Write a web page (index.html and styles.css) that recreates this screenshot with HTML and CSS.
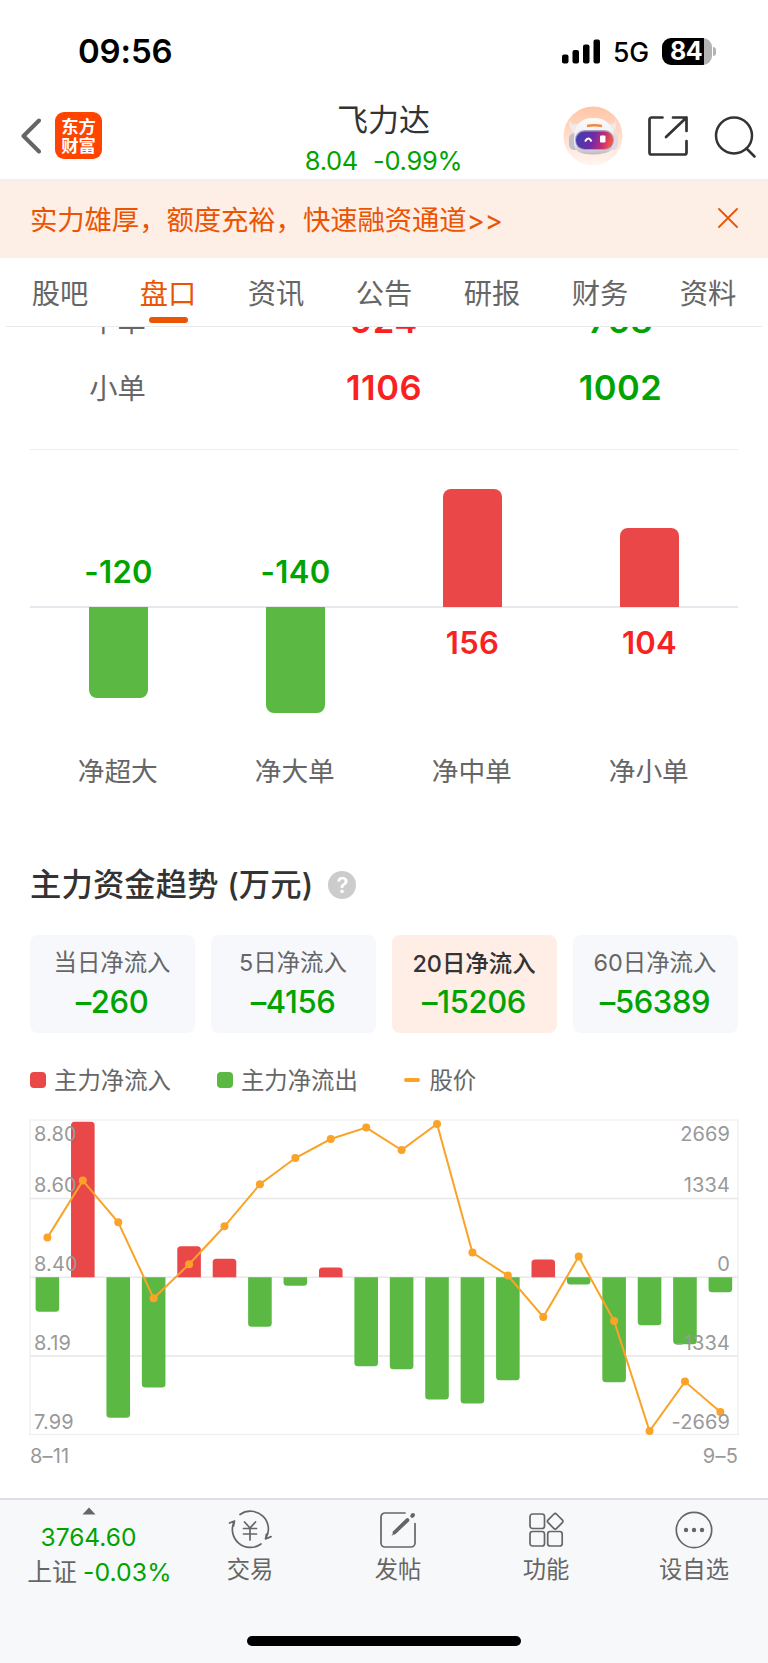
FILE: index.html
```html
<!DOCTYPE html>
<html lang="zh-CN">
<head>
<meta charset="utf-8">
<title>飞力达</title>
<link rel="stylesheet" href="styles.css">
</head>
<body>
<div class="screen">
  <div class="status">
    <span class="clock">09:56</span>
    <div class="status-right">
      <svg class="signal" width="39" height="25" viewBox="0 0 39 25"><rect x="0" y="15.5" width="6.5" height="9" rx="2"/><rect x="10.5" y="11" width="6.5" height="13.500" rx="2"/><rect x="21" y="5.500" width="6.500" height="19" rx="2"/><rect x="31.500" y="0.500" width="6.500" height="24" rx="2"/></svg>
      <span class="network">5G</span>
      <div class="battery"><span>84</span></div>
      <i class="battery-nub"></i>
    </div>
  </div>

  <header class="nav">
    <div class="nav-left">
      <svg width="20" height="36" viewBox="0 0 20 36"><path d="M18 2.500 2.500 18 18 33.500" fill="none" stroke="#666" stroke-width="4" stroke-linecap="round" stroke-linejoin="round"/></svg>
      <div class="logo"><span>东方</span><span>财富</span></div>
    </div>
    <div class="nav-title">
      <h1>飞力达</h1>
      <p><span>8.04</span><span>-0.99%</span></p>
    </div>
    <div class="nav-right">
      <svg class="bot" width="60" height="60" viewBox="0 0 60 60">
        <defs>
          <linearGradient id="halo" x1="0" y1="0" x2="0" y2="1"><stop offset="0" stop-color="#ffc5a6"/><stop offset="1" stop-color="#fff6f2"/></linearGradient>
          <linearGradient id="visor" x1="0" y1="0" x2="1" y2="0.15"><stop offset="0" stop-color="#3c41b5"/><stop offset=".5" stop-color="#6f2aa6"/><stop offset=".8" stop-color="#c52c78"/><stop offset="1" stop-color="#ef5348"/></linearGradient>
          <linearGradient id="shell" x1="0" y1="0" x2="0" y2="1"><stop offset="0" stop-color="#fbfafb"/><stop offset=".7" stop-color="#eceaf0"/><stop offset="1" stop-color="#bdb9c3"/></linearGradient>
        </defs>
        <circle cx="30" cy="30" r="29.500" fill="url(#halo)"/>
        <path d="M6 14q-.5 9 6 13l6-10Q8 21 6 14ZM53 14q2 9-5 13l-6-10q9 4 11-3Z" fill="#f0eaee"/>
        <rect x="6" y="27" width="11" height="17" rx="5.500" fill="#c3bfc8"/>
        <rect x="44" y="27" width="11" height="17" rx="5.500" fill="#dfdae1"/>
        <path d="M11 33q0-21 19.500-21T51 33v4q0 11-20 11.500T11 37Z" fill="url(#shell)"/>
        <path d="M24 20q7-1.500 15 0" fill="none" stroke="#ee8a3e" stroke-width="2.500"/>
        <rect x="12" y="24" width="39" height="20" rx="9.500" fill="#a9a2bd"/>
        <rect x="13" y="25.500" width="37" height="17.500" rx="8.500" fill="url(#visor)"/>
        <path d="M22 35.500q3.500-6 6.500 0" fill="none" stroke="#fff" stroke-width="2"/>
        <rect x="37" y="29.500" width="5.500" height="7" rx="1" fill="#fff"/>
      </svg>
      <svg class="share" width="42" height="42" viewBox="0 0 42 42" fill="none" stroke="#333" stroke-width="2.700" stroke-linecap="round" stroke-linejoin="round"><path d="M15.500 2.500H4.500a2 2 0 0 0-2 2v33a2 2 0 0 0 2 2h33a2 2 0 0 0 2-2V26"/><path d="M26 2.500h13.500V16M39.500 2.500 19 22"/></svg>
      <svg class="search" width="42" height="42" viewBox="0 0 42 42" fill="none" stroke="#333" stroke-width="2.500" stroke-linecap="round"><circle cx="20" cy="19.500" r="18"/><path d="M32.500 32.500 40.500 40.500"/></svg>
    </div>
  </header>

  <div class="banner">
    <span>实力雄厚，额度充裕，快速融资通道&gt;&gt;</span>
    <svg width="20" height="20" viewBox="0 0 20 20"><path d="M1 1 19 19M19 1 1 19" stroke="#ea5504" stroke-width="1.800" stroke-linecap="round"/></svg>
  </div>

  <nav class="tabs">
    <a>股吧</a><a class="on">盘口</a><a>资讯</a><a>公告</a><a>研报</a><a>财务</a><a>资料</a>
  </nav>

  <section class="orders">
    <div class="row"><span class="kind">中单</span><b class="up">924</b><b class="down">768</b></div>
    <div class="row"><span class="kind">小单</span><b class="up">1106</b><b class="down">1002</b></div>
  </section>

  <section class="net">
    <div class="net-col neg"><div class="upper"><b>-120</b></div><div class="lower"><i style="height:91px"></i></div><span>净超大</span></div>
    <div class="net-col neg"><div class="upper"><b>-140</b></div><div class="lower"><i style="height:106px"></i></div><span>净大单</span></div>
    <div class="net-col pos"><div class="upper"><i style="height:118px"></i></div><div class="lower"><b>156</b></div><span>净中单</span></div>
    <div class="net-col pos"><div class="upper"><i style="height:79px"></i></div><div class="lower"><b>104</b></div><span>净小单</span></div>
  </section>

  <section class="trend">
    <div class="heading"><h2>主力资金趋势 (万元)</h2><span class="help">?</span></div>
    <div class="cards">
      <div class="card"><span>当日净流入</span><b>–260</b></div>
      <div class="card"><span>5日净流入</span><b>–4156</b></div>
      <div class="card on"><span>20日净流入</span><b>–15206</b></div>
      <div class="card"><span>60日净流入</span><b>–56389</b></div>
    </div>
    <div class="legend">
      <div class="key in"><i></i><span>主力净流入</span></div>
      <div class="key out"><i></i><span>主力净流出</span></div>
      <div class="key price"><i></i><span>股价</span></div>
    </div>
    <svg class="chart" width="710" height="317" viewBox="0 0 710 317">
      <g class="frame"><rect x="1" y="1" width="708" height="314.500"/></g>
      <g class="grid"><path d="M1 79.500H709M1 158.200H709M1 237H709"/></g>
      <g id="bars"></g>
      <g id="price"></g>
      <g class="axis">
        <text x="5" y="22.300">8.80</text><text x="5" y="73.300">8.60</text><text x="5" y="152.300">8.40</text><text x="5" y="231">8.19</text><text x="5" y="309.500">7.99</text>
        <g text-anchor="end"><text x="701" y="22.300">2669</text><text x="701" y="73.300">1334</text><text x="701" y="152.300">0</text><text x="701" y="231">-1334</text><text x="701" y="309.500">-2669</text></g>
      </g>
    </svg>
    <div class="dates"><span>8–11</span><span>9–5</span></div>
  </section>

  <footer class="dock">
    <div class="index">
      <svg width="14" height="8" viewBox="0 0 14 8"><path d="M7 .5 13.500 7.500H.5Z" fill="#666"/></svg>
      <b>3764.60</b>
      <p><span>上证</span><em>-0.03%</em></p>
    </div>
    <div class="item">
      <svg width="44" height="40" viewBox="0 0 44 40" fill="none" stroke="#666" stroke-width="1.700" stroke-linecap="round" stroke-linejoin="round"><path d="M12 4.500A18 18 0 0 1 37.500 29L43 26.600M37.500 29 38.500 24M33 34A18 18 0 0 1 6.500 11L1.500 13M6.500 11 5.500 16"/><path d="M16.500 12 22 18 27.500 12M22 18V30M15.500 18.500H28.500M15.500 24H28.500"/></svg>
      <span>交易</span>
    </div>
    <div class="item">
      <svg width="40" height="40" viewBox="0 0 40 40" fill="none" stroke="#666" stroke-width="1.700" stroke-linecap="round"><path d="M27 3H7a4 4 0 0 0-4 4v26a4 4 0 0 0 4 4h26a4 4 0 0 0 4-4V13.500"/><path d="M13.500 26 16 21.500 28.500 8.500 31 11 18 23Z" fill="#666" stroke="none"/><path d="M16.500 22.500 29.500 10" stroke-width="3.800"/><path d="M34.200 5.800 35 5" stroke-width="4"/></svg>
      <span>发帖</span>
    </div>
    <div class="item">
      <svg width="40" height="40" viewBox="0 0 40 40" fill="none" stroke="#666" stroke-width="1.700"><rect x="4" y="4" width="14.500" height="14.500" rx="2.500"/><rect x="4" y="21.500" width="14.500" height="14.500" rx="2.500"/><rect x="21.700" y="21.500" width="14.500" height="14.500" rx="2.500"/><rect x="23.200" y="5.300" width="12" height="12" rx="2" transform="rotate(45 29.200 11.300)"/></svg>
      <span>功能</span>
    </div>
    <div class="item">
      <svg width="40" height="40" viewBox="0 0 40 40"><circle cx="20" cy="20" r="17.700" fill="none" stroke="#666" stroke-width="1.700"/><g fill="#666"><circle cx="12" cy="20" r="2.200"/><circle cx="20" cy="20" r="2.200"/><circle cx="28" cy="20" r="2.200"/></g></svg>
      <span>设自选</span>
    </div>
    <i class="home"></i>
  </footer>
</div>
<script src="chart.js"></script>
</body>
</html>
```
FILE: styles.css
```css
* { box-sizing: border-box; margin: 0; padding: 0; }
body { width: 768px; background: #fff; color: #333; font-family: Inter, "Noto Sans CJK SC", sans-serif; }
svg { display: block; flex: none; }
i, em { font-style: normal; }
.screen { width: 768px; height: 1663px; overflow: hidden; display: flex; flex-direction: column; background: #fff; }
.screen > * { flex: none; }

.status { height: 104px; padding: 0 52px 2px 78px; display: flex; align-items: center; justify-content: space-between; color: #000; }
.clock { font-size: 33px; font-weight: 600; letter-spacing: -.15px; }
.status-right { display: flex; align-items: center; }
.network { margin-left: 12px; width: 37px; font-size: 26.500px; font-weight: 450; letter-spacing: -.2px; line-height: 28px; padding-top: 2px; }
.battery { margin-left: 12px; width: 50px; height: 27px; border-radius: 9px; background: linear-gradient(90deg, #000 42px, #b3b3b3 42px); color: #fff; font-size: 25px; font-weight: 700; line-height: 27px; padding-left: 8px; letter-spacing: -.6px; }
.battery-nub { width: 3px; height: 9px; margin-left: 1px; border-radius: 0 4px 4px 0; background: #b3b3b3; }

.nav { height: 77px; border-bottom: 2px solid #eeeff2; display: grid; grid-template-columns: 270px 228px 270px; }
.nav-left { display: flex; align-items: flex-start; padding: 8px 0 0 20.500px; gap: 14.500px; }
.nav-left > svg { margin-top: 6px; }
.logo { width: 47px; height: 47px; border-radius: 9px; background: #ff4400; color: #fff; display: flex; flex-direction: column; align-items: center; justify-content: center; font-size: 17.300px; font-weight: 700; line-height: 19px; }
.nav-title { text-align: center; padding-right: 1px; }
.nav-title h1 { font-size: 31px; font-weight: 400; line-height: 36px; height: 36px; margin-top: -2px; }
.nav-title p { display: flex; justify-content: center; gap: 15px; color: #00a300; font-size: 25.500px; line-height: 30px; margin-top: 8px; letter-spacing: -.3px; }
.nav-right { display: flex; align-items: flex-start; padding: 2px 12px 0 0; justify-content: flex-end; }
.share { margin: 9px 0 0 24px; }
.search { margin: 9.500px 0 0 25px; }

.banner { height: 77px; background: #fdeee6; color: #ea5504; padding: 0 30px 3px 30px; display: flex; align-items: center; justify-content: space-between; font-size: 27.4px; }
.banner span { letter-spacing: -.1px; }

.tabs { height: 69px; margin: 0 6px; border-bottom: 1.5px solid #e9eaed; display: grid; grid-template-columns: repeat(7, 1fr); background: #fff; z-index: 1; }
.tabs a { text-align: center; font-size: 28.3px; line-height: 41px; padding-top: 16px; color: #666; display: flex; flex-direction: column; align-items: center; }
.tabs .on { color: #ea5504; }
.tabs .on::after { content: ""; width: 39px; height: 6px; border-radius: 3px; background: #ea5504; margin-top: 2px; }

.orders { height: 123px; margin: 0 30px; border-bottom: 1.5px solid #eee; overflow: hidden; display: flex; flex-direction: column; justify-content: flex-end; padding-bottom: 28px; }
.row { flex: none; height: 66.7px; display: grid; grid-template-columns: 175px 358px 115px; align-items: center; text-align: center; }
.row .kind { font-size: 28.300px; color: #666; padding-bottom: 2px; }
.row b { font-size: 34.500px; font-weight: 600; letter-spacing: .5px; }
.row .down { justify-self: center; }
.up { color: #f92121; }
.down { color: #00a300; }

.net { height: 379px; margin: 0 30px; display: grid; grid-template-columns: repeat(4, 1fr); }
.net-col { display: flex; flex-direction: column; align-items: center; }
.net-col i { width: 59px; }
.net-col b { font-size: 31px; font-weight: 600; line-height: 38px; letter-spacing: .3px; }
.upper { width: 100%; height: 158px; border-bottom: 2px solid #e6e8ee; display: flex; flex-direction: column; align-items: center; justify-content: flex-end; }
.upper b { margin-bottom: 15px; color: #00a300; }
.upper i { background: #ea4748; border-radius: 8px 8px 0 0; margin-bottom: -1px; }
.lower { height: 143px; display: flex; flex-direction: column; align-items: center; margin-top: -1px; }
.lower b { color: #f92121; margin-top: 17px; }
.lower i { background: #5bb943; border-radius: 0 0 8px 8px; }
.net-col span { font-size: 26.7px; line-height: 42px; color: #666; padding-right: 1.500px; }

.trend { height: 669px; padding: 0 29px; }
.heading { height: 106px; padding: 32px 0 0 1px; display: flex; align-items: flex-start; gap: 15px; }
.heading h2 { font-size: 31.300px; line-height: 46px; font-weight: 500; white-space: nowrap; letter-spacing: .15px; padding-top: 1px; }
.help { width: 28px; height: 28px; margin-top: 10px; border-radius: 50%; background: #ccc; color: #fff; font-size: 22px; line-height: 28px; font-weight: 600; text-align: center; }
.cards { padding: 0 1px; display: grid; grid-template-columns: repeat(4, 165px); gap: 16px; }
.card { height: 98px; border-radius: 8px; background: #f7f8fb; display: flex; flex-direction: column; align-items: center; padding-top: 9.500px; }
.card span { font-size: 23.400px; line-height: 36px; color: #666; white-space: nowrap; padding-right: 1px; }
.card b { font-size: 31px; line-height: 38px; margin-top: 2.500px; font-weight: 500; color: #00a300; letter-spacing: -.4px; padding-right: 1px; }
.card.on { background: #ffeee6; }
.card.on span { color: #333; font-weight: 500; }
.card.on span { padding-top: 1px; margin-bottom: -1px; }
.legend { height: 86px; padding: 8px 1px 0; display: flex; align-items: center; }
.key { display: flex; align-items: center; gap: 8px; font-size: 23.400px; color: #666; }
.key span { margin-top: -2px; }
.key i { width: 16px; height: 16px; border-radius: 4px; background: #ea4748; }
.key.out { margin-left: 46px; }
.key.out i { background: #5bb943; }
.key.price { margin-left: 46.500px; gap: 9px; }
.key.price i { height: 4px; border-radius: 2px; background: #faa328; }
.frame rect { fill: none; stroke: #f1f1f1; stroke-width: 1.500; }
.grid path { stroke: #e8e8e8; stroke-width: 1.500; }
.axis text { font-size: 20px; fill: #999; letter-spacing: .1px; }
.pos-bar { fill: #ea4748; }
.neg-bar { fill: #5bb943; }
.price-line { fill: none; stroke: #faa328; stroke-width: 2; }
.price-dot { fill: #faa328; }
.dates { display: flex; justify-content: space-between; padding: 0 1px; font-size: 20px; line-height: 24px; margin-top: 8px; color: #999; letter-spacing: .2px; }

.dock { height: 165px; background: #f7f8fa; border-top: 2px solid #dddee1; display: grid; grid-template-columns: 176px repeat(4, 148px); grid-template-rows: 136px 27px; }
.index { display: flex; flex-direction: column; align-items: center; padding: 7px 0 0 1px; color: #00a300; }
.index b { font-size: 24.500px; font-weight: 400; line-height: 30px; margin-top: 7px; letter-spacing: 0; }
.index p { display: flex; align-items: center; gap: 6px; font-size: 24.800px; line-height: 34px; margin: 3px 0 0 22px; white-space: nowrap; letter-spacing: .1px; }
.index p span { color: #666; letter-spacing: 0; }
.item { display: flex; flex-direction: column; align-items: center; padding-top: 10px; font-size: 23.300px; line-height: 34px; color: #666; }
.item span { margin-top: 3px; }
.home { grid-column: 1 / -1; justify-self: center; width: 274px; height: 10px; border-radius: 5px; background: #000; }
```
FILE: chart.js
```js
// Signed bar lengths and price positions, in chart units from the top of the plot.
const flows = [-34.6, 155.5, -140.6, -110.3, 31, 18.5, -49.6, -8.6, 9.6, -89, -92, -122.3, -126.3, -103, 17.6, -7.3, -105, -48, -67, -15];
const prices = [118.6, 61.6, 103.3, 179.3, 145.3, 107.3, 65.3, 39, 20, 8.6, 31, 5, 133.6, 156.6, 198, 137.6, 202, 312, 262.6, 293];
const zero = 158.2, first = 18.4, step = 35.42, w = 23.6, r = 3.5;
const x = i => first + step * i;
document.getElementById('bars').innerHTML = flows.map((v, i) => {
  const left = x(i) - w / 2, s = v > 0 ? -1 : 1, h = Math.abs(v);
  return `<path class="${v > 0 ? 'pos' : 'neg'}-bar" d="M${left} ${zero}v${s * (h - r)}q0 ${s * r} ${r} ${s * r}h${w - 2 * r}q${r} 0 ${r} ${-s * r}v${-s * (h - r)}z"/>`;
}).join('');
document.getElementById('price').innerHTML =
  `<polyline class="price-line" points="${prices.map((y, i) => x(i) + ',' + y).join(' ')}"/>` +
  prices.map((y, i) => `<circle class="price-dot" cx="${x(i)}" cy="${y}" r="4"/>`).join('');
```
